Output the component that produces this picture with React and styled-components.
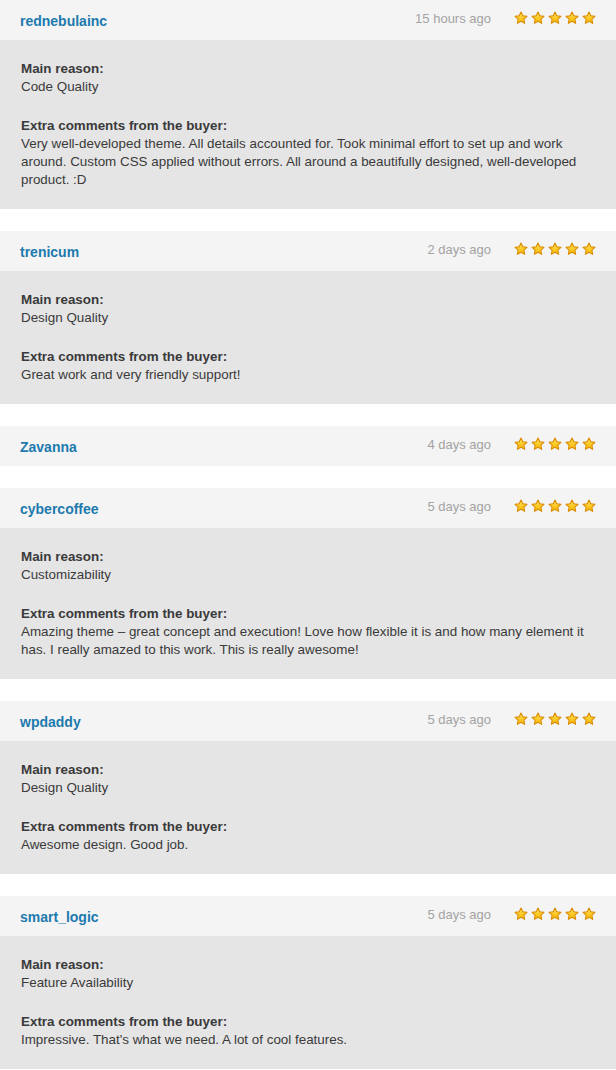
import React from 'react';
import styled, { createGlobalStyle } from 'styled-components';

const GlobalStyle = createGlobalStyle`
    body {
        margin: 0;
        background: #fff;
        font-family: "Liberation Sans", Arial, sans-serif;
        color: #333;
    }
`

const List = styled.div`
    display: flex;
    flex-direction: column;
    gap: 22px;
`

const Review = styled.div`
    display: flex;
    flex-direction: column;
`

const Header = styled.div`
    display: flex;
    align-items: center;
    height: 40px;
    box-sizing: border-box;
    padding: 0 20px 4px;
    background: #f4f4f4;
`

const User = styled.a`
    flex: 1;
    font-size: 14px;
    font-weight: 700;
    color: #1d7aae;
    text-decoration: none;
    margin-top: 5px;
`

const Time = styled.span`
    font-size: 13px;
    color: #a3a3a3;
    margin-right: 23px;
`

const Stars = styled.div`
    display: flex;
    gap: 3px;
    margin-bottom: 1px;
`

const Body = styled.div`
    background: #e5e5e5;
    padding: 20px 20px 20px 21px;
    font-size: 13.4px;
    line-height: 18px;
    color: #3a3a3a;
`

const Section = styled.div`
    & + & {
        margin-top: 21px;
    }
`

const Label = styled.div`
    font-weight: 700;
`

const Star = () => (
    <svg width="14" height="14" viewBox="0 0 24 24">
        <defs>
            <linearGradient id="starFill" x1="0" y1="0" x2="0" y2="1">
                <stop offset="0" stopColor="#ffe35a" />
                <stop offset="1" stopColor="#f7b500" />
            </linearGradient>
        </defs>
        <path
            d="M12 1.8l3.1 6.5 7.1.9-5.2 4.9 1.3 7.1L12 17.7l-6.3 3.5 1.3-7.1-5.2-4.9 7.1-.9z"
            fill="url(#starFill)"
            stroke="#d98a00"
            strokeWidth="1.8"
            strokeLinejoin="round"
        />
    </svg>
)

const reviews = [
    {
        user: 'rednebulainc',
        time: '15 hours ago',
        reason: 'Code Quality',
        comment: 'Very well-developed theme. All details accounted for. Took minimal effort to set up and work around. Custom CSS applied without errors. All around a beautifully designed, well-developed product. :D',
    },
    {
        user: 'trenicum',
        time: '2 days ago',
        reason: 'Design Quality',
        comment: 'Great work and very friendly support!',
    },
    {
        user: 'Zavanna',
        time: '4 days ago',
    },
    {
        user: 'cybercoffee',
        time: '5 days ago',
        reason: 'Customizability',
        comment: 'Amazing theme – great concept and execution! Love how flexible it is and how many element it has. I really amazed to this work. This is really awesome!',
    },
    {
        user: 'wpdaddy',
        time: '5 days ago',
        reason: 'Design Quality',
        comment: 'Awesome design. Good job.',
    },
    {
        user: 'smart_logic',
        time: '5 days ago',
        reason: 'Feature Availability',
        comment: "Impressive. That's what we need. A lot of cool features.",
    },
]

const App = () => {
    return (
        <>
            <GlobalStyle />
            <List>
                {reviews.map((r) => (
                    <Review key={r.user}>
                        <Header>
                            <User href="#">{r.user}</User>
                            <Time>{r.time}</Time>
                            <Stars>
                                {[0, 1, 2, 3, 4].map((i) => <Star key={i} />)}
                            </Stars>
                        </Header>
                        {r.reason && (
                            <Body>
                                <Section>
                                    <Label>Main reason:</Label>
                                    <div>{r.reason}</div>
                                </Section>
                                <Section>
                                    <Label>Extra comments from the buyer:</Label>
                                    <div>{r.comment}</div>
                                </Section>
                            </Body>
                        )}
                    </Review>
                ))}
            </List>
        </>
    )
}
export default App
